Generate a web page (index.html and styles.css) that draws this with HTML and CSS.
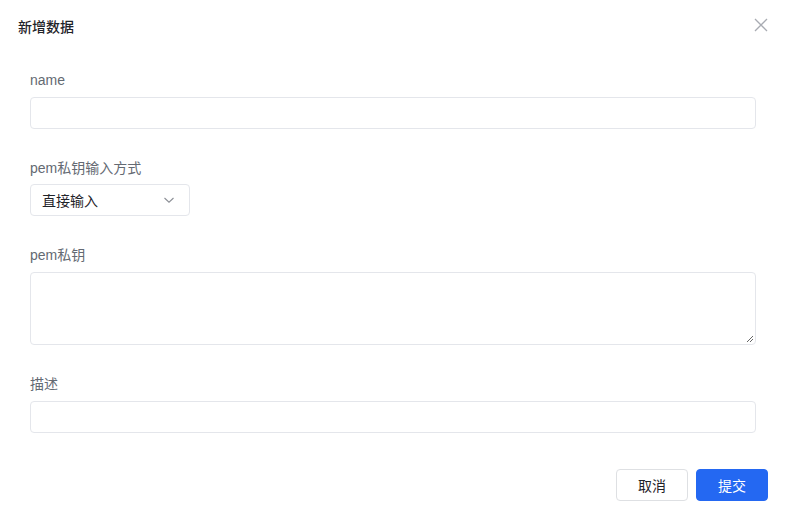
FILE: index.html
```html
<!DOCTYPE html>
<html lang="zh">
<head>
<meta charset="utf-8">
<link rel="stylesheet" href="styles.css">
</head>
<body>
<div class="dialog">
  <div class="header">
    <span class="title">新增数据</span>
    <span class="close">
      <svg width="14" height="14" viewBox="0 0 14 14"><path d="M1 1L13 13M13 1L1 13" stroke="#a8abb2" stroke-width="1.3" fill="none"/></svg>
    </span>
  </div>
  <form class="form">
    <div class="item">
      <label class="label">name</label>
      <div class="input"></div>
    </div>
    <div class="item">
      <label class="label">pem私钥输入方式</label>
      <div class="select">
        <span>直接输入</span>
        <svg width="12" height="12" viewBox="0 0 12 12"><path d="M1.5 4L6 8.2L10.5 4" stroke="#8c8f96" stroke-width="1.1" fill="none"/></svg>
      </div>
    </div>
    <div class="item">
      <label class="label">pem私钥</label>
      <div class="textarea">
        <svg class="grip" width="8" height="8" viewBox="0 0 8 8"><path d="M7 1L1 7M7 4L4 7" stroke="#666" stroke-width="1" fill="none"/></svg>
      </div>
    </div>
    <div class="item">
      <label class="label">描述</label>
      <div class="input"></div>
    </div>
  </form>
  <div class="footer">
    <button class="btn" type="button">取消</button>
    <button class="btn primary" type="button">提交</button>
  </div>
</div>
</body>
</html>
```
FILE: styles.css
```css
* { box-sizing: border-box; }
html, body { margin: 0; padding: 0; background: #fff; }
body {
  font-family: "Liberation Sans", "Noto Sans CJK SC", sans-serif;
  width: 785px;
  height: 524px;
  overflow: hidden;
}
.dialog { padding: 0; }
.header {
  display: flex;
  justify-content: space-between;
  align-items: center;
  height: 50px;
  padding: 0 18px 0 18px;
}
.title {
  font-size: 14px;
  font-weight: 500;
  color: #1f2329;
  margin-top: 1px;
}
.close { display: flex; width: 14px; height: 14px; margin-right: -1px; }
.form { padding: 19px 29px 0 30px; }
.item { margin-bottom: 28px; }
.item:last-child { margin-bottom: 0; }
.label {
  display: block;
  font-size: 14px;
  line-height: 22px;
  color: #646a73;
  margin-bottom: 6px;
}
.input {
  height: 32px;
  border: 1px solid #e4e6eb;
  border-radius: 4px;
}
.select {
  width: 160px;
  height: 32px;
  margin-top: -1px;
  margin-bottom: 1px;
  border: 1px solid #e4e6eb;
  border-radius: 4px;
  display: flex;
  align-items: center;
  justify-content: space-between;
  padding: 0 14px 0 11px;
  font-size: 14px;
  color: #1f2329;
}
.textarea {
  height: 73px;
  border: 1px solid #e4e6eb;
  border-radius: 4px;
  position: relative;
}
.grip { position: absolute; right: 1px; bottom: 1px; }
.footer {
  display: flex;
  justify-content: flex-end;
  gap: 8px;
  padding: 36px 17px 0 0;
}
.btn {
  width: 72px;
  height: 32px;
  border: 1px solid #dee0e3;
  border-radius: 4px;
  background: #fff;
  font-family: inherit;
  font-size: 14px;
  color: #1f2329;
  padding: 0;
}
.btn.primary {
  background: #2468f2;
  border-color: #2468f2;
  color: #fff;
}
```
